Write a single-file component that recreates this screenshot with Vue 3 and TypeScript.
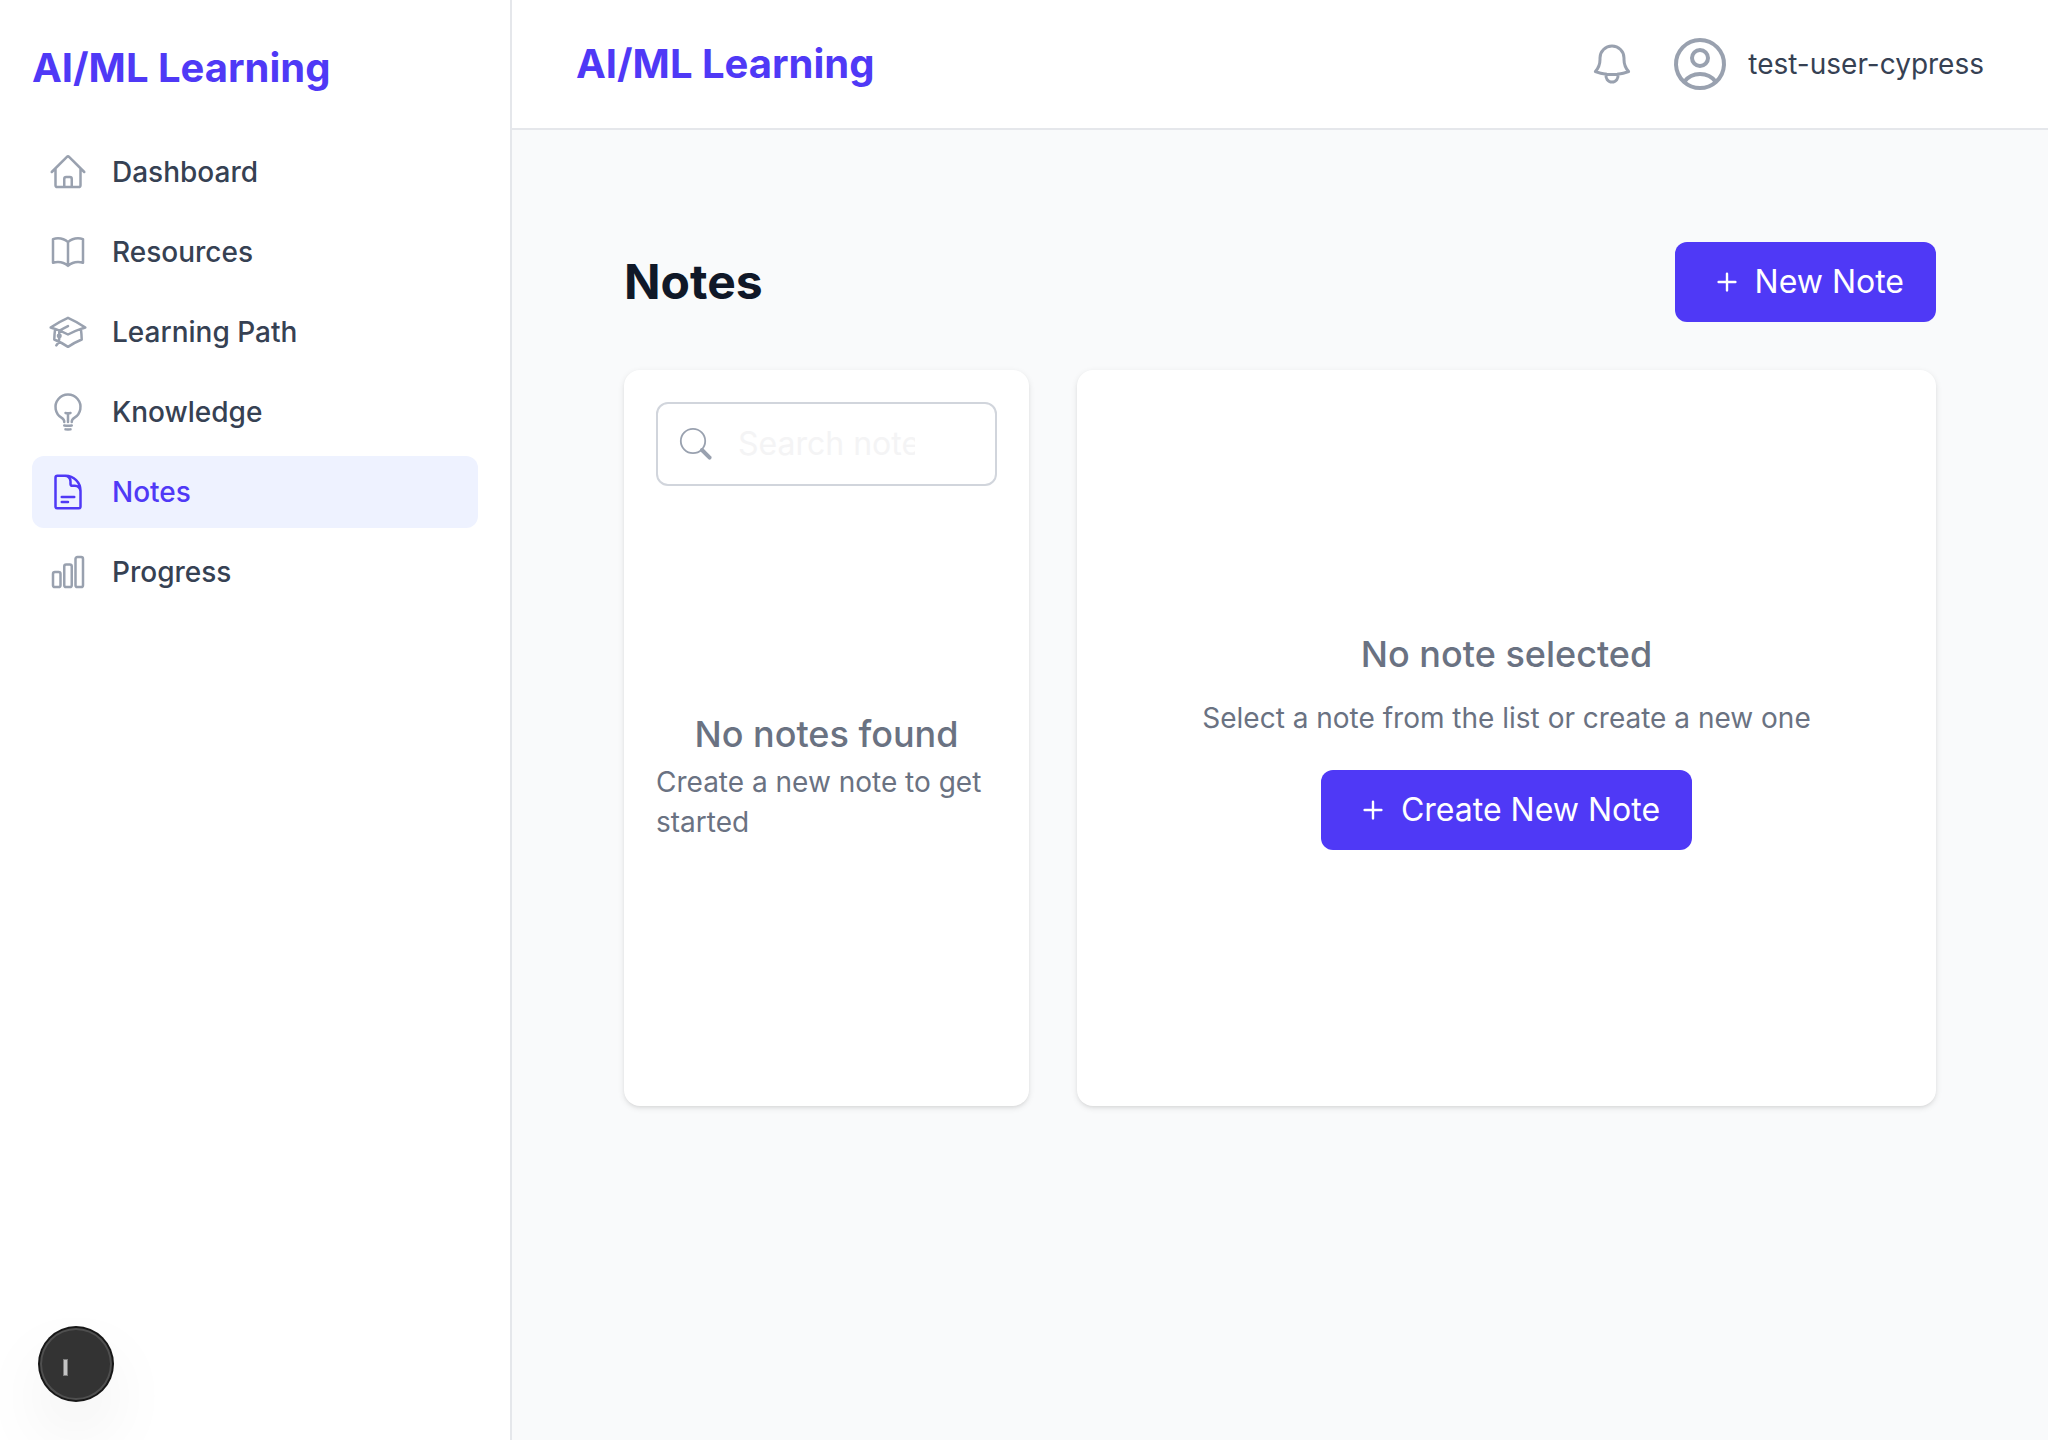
<script setup lang="ts">
interface NavItem {
  label: string
  icon: string
  active?: boolean
}

const navItems: NavItem[] = [
  {
    label: 'Dashboard',
    icon: 'm2.25 12 8.954-8.955c.44-.439 1.152-.439 1.591 0L21.75 12M4.5 9.75v10.125c0 .621.504 1.125 1.125 1.125H9.75v-4.875c0-.621.504-1.125 1.125-1.125h2.25c.621 0 1.125.504 1.125 1.125V21h4.125c.621 0 1.125-.504 1.125-1.125V9.75M8.25 21h8.25',
  },
  {
    label: 'Resources',
    icon: 'M12 6.042A8.967 8.967 0 0 0 6 3.75c-1.052 0-2.062.18-3 .512v14.25A8.987 8.987 0 0 1 6 18c2.305 0 4.408.867 6 2.292m0-14.25a8.966 8.966 0 0 1 6-2.292c1.052 0 2.062.18 3 .512v14.25A8.987 8.987 0 0 0 18 18a8.967 8.967 0 0 0-6 2.292m0-14.25v14.25',
  },
  {
    label: 'Learning Path',
    icon: 'M4.26 10.147a60.438 60.438 0 0 0-.491 6.347A48.62 48.62 0 0 1 12 20.904a48.62 48.62 0 0 1 8.232-4.41 60.46 60.46 0 0 0-.491-6.347m-15.482 0a50.636 50.636 0 0 0-2.658-.813A59.906 59.906 0 0 1 12 3.493a59.903 59.903 0 0 1 10.399 5.84c-.896.248-1.783.52-2.658.814m-15.482 0A50.717 50.717 0 0 1 12 13.489a50.702 50.702 0 0 1 7.74-3.342M6.75 15a.75.75 0 1 0 0-1.5.75.75 0 0 0 0 1.5Zm0 0v-3.675A55.378 55.378 0 0 1 12 8.443m-7.007 11.55A5.981 5.981 0 0 0 6.75 15.75v-1.5',
  },
  {
    label: 'Knowledge',
    icon: 'M12 18v-5.25m0 0a6.01 6.01 0 0 0 1.5-.189m-1.5.189a6.01 6.01 0 0 1-1.5-.189m3.75 7.478a12.06 12.06 0 0 1-4.5 0m3.75 2.383a14.406 14.406 0 0 1-3 0M14.25 18v-.192c0-.983.658-1.823 1.508-2.316a7.5 7.5 0 1 0-7.517 0c.85.493 1.509 1.333 1.509 2.316V18',
  },
  {
    label: 'Notes',
    active: true,
    icon: 'M19.5 14.25v-2.625a3.375 3.375 0 0 0-3.375-3.375h-1.5A1.125 1.125 0 0 1 13.5 7.125v-1.5a3.375 3.375 0 0 0-3.375-3.375H8.25m0 12.75h7.5m-7.5 3H12M10.5 2.25H5.625c-.621 0-1.125.504-1.125 1.125v17.25c0 .621.504 1.125 1.125 1.125h12.75c.621 0 1.125-.504 1.125-1.125V11.25a9 9 0 0 0-9-9Z',
  },
  {
    label: 'Progress',
    icon: 'M3 13.125C3 12.504 3.504 12 4.125 12h2.25c.621 0 1.125.504 1.125 1.125v6.75C7.5 20.496 6.996 21 6.375 21h-2.25A1.125 1.125 0 0 1 3 19.875v-6.75ZM9.75 8.625c0-.621.504-1.125 1.125-1.125h2.25c.621 0 1.125.504 1.125 1.125v11.25c0 .621-.504 1.125-1.125 1.125h-2.25a1.125 1.125 0 0 1-1.125-1.125V8.625ZM16.5 4.125c0-.621.504-1.125 1.125-1.125h2.25C20.496 3 21 3.504 21 4.125v15.75c0 .621-.504 1.125-1.125 1.125h-2.25a1.125 1.125 0 0 1-1.125-1.125V4.125Z',
  },
]

const plusPath =
  'M10.75 4.75a.75.75 0 0 0-1.5 0v4.5h-4.5a.75.75 0 0 0 0 1.5h4.5v4.5a.75.75 0 0 0 1.5 0v-4.5h4.5a.75.75 0 0 0 0-1.5h-4.5v-4.5Z'
</script>

<template>
  <div class="app">
    <aside class="sidebar">
      <div class="brand">AI/ML Learning</div>
      <nav class="nav">
        <a v-for="item in navItems" :key="item.label" class="nav-link" :class="{ active: item.active }">
          <svg class="outline nav-icon" viewBox="0 0 24 24"><path :d="item.icon" /></svg>
          <span>{{ item.label }}</span>
        </a>
      </nav>
    </aside>

    <div class="content">
      <header class="topbar">
        <div class="brand">AI/ML Learning</div>
        <div class="account">
          <svg class="outline bell" viewBox="0 0 24 24">
            <path d="M14.857 17.082a23.848 23.848 0 0 0 5.454-1.31A8.967 8.967 0 0 1 18 9.75V9A6 6 0 0 0 6 9v.75a8.967 8.967 0 0 1-2.312 6.022c1.733.64 3.56 1.085 5.455 1.31m5.714 0a24.255 24.255 0 0 1-5.714 0m5.714 0a3 3 0 1 1-5.714 0" />
          </svg>
          <svg class="outline avatar" viewBox="0 0 24 24">
            <path d="M17.982 18.725A7.488 7.488 0 0 0 12 15.75a7.488 7.488 0 0 0-5.982 2.975m11.963 0a9 9 0 1 0-11.963 0m11.963 0A8.966 8.966 0 0 1 12 21a8.966 8.966 0 0 1-5.982-2.275M15 9.75a3 3 0 1 1-6 0 3 3 0 0 1 6 0Z" />
          </svg>
          <span class="username">test-user-cypress</span>
        </div>
      </header>

      <main class="page">
        <div class="page-head">
          <h1>Notes</h1>
          <button class="btn" type="button">
            <svg class="plus" viewBox="0 0 20 20"><path :d="plusPath" /></svg>
            <span>New Note</span>
          </button>
        </div>

        <div class="panels">
          <section class="card list">
            <div class="search">
              <svg class="search-icon" viewBox="0 0 40 40">
                <circle cx="17" cy="17" r="12.2" />
                <path d="M26 26 33.6 33.6" />
              </svg>
              <span class="search-text">Search notes...</span>
            </div>
            <div class="list-empty">
              <h3>No notes found</h3>
              <p>Create a new note to get started</p>
            </div>
          </section>

          <section class="card detail">
            <h3>No note selected</h3>
            <p>Select a note from the list or create a new one</p>
            <button class="btn" type="button">
              <svg class="plus" viewBox="0 0 20 20"><path :d="plusPath" /></svg>
              <span>Create New Note</span>
            </button>
          </section>
        </div>
      </main>
    </div>

    <div class="dev-badge"><span class="dev-mark"></span></div>
  </div>
</template>

<style>
body {
  margin: 0;
  background: #f9fafb;
}
</style>

<style scoped>
.app {
  position: relative;
  display: flex;
  height: 1440px;
  overflow: hidden;
  background: #f9fafb;
  color: #364153;
  font-family: Inter, 'Liberation Sans', sans-serif;
  font-size: 28px;
  line-height: 40px;
}
.app * {
  box-sizing: border-box;
}
h1,
h3,
p {
  margin: 0;
}
.outline {
  flex: none;
  fill: none;
  stroke: #99a1af;
  stroke-width: 1.5;
  stroke-linecap: round;
  stroke-linejoin: round;
}
.brand {
  color: #4f39f6;
  font-size: 40px;
  font-weight: 700;
  line-height: 56px;
}
.sidebar {
  flex: none;
  width: 512px;
  padding: 40px 32px;
  border-right: 2px solid #e5e7eb;
  background: #fff;
}
.nav {
  display: flex;
  flex-direction: column;
  gap: 8px;
  margin-top: 40px;
}
.nav-link {
  display: flex;
  align-items: center;
  gap: 24px;
  padding: 16px;
  border-radius: 12px;
  font-weight: 500;
}
.nav-link.active {
  background: #eef2ff;
  color: #4f39f6;
}
.nav-link.active .nav-icon {
  stroke: #4f39f6;
}
.nav-icon {
  width: 40px;
  height: 40px;
}
.content {
  flex: 1;
  min-width: 0;
}
.topbar {
  display: flex;
  align-items: center;
  justify-content: space-between;
  height: 130px;
  padding: 0 64px;
  border-bottom: 2px solid #e5e7eb;
  background: #fff;
}
.account {
  display: flex;
  align-items: center;
}
.bell {
  width: 48px;
  height: 48px;
  margin-right: 32px;
}
.avatar {
  width: 64px;
  height: 64px;
  margin-right: 16px;
}
.page {
  padding: 112px;
}
.page-head {
  display: flex;
  align-items: center;
  justify-content: space-between;
  margin-bottom: 48px;
}
h1 {
  color: #101828;
  font-size: 48px;
  font-weight: 700;
  line-height: 64px;
}
.btn {
  display: flex;
  align-items: center;
  height: 80px;
  padding: 0 32px 0 36px;
  border: 0;
  border-radius: 12px;
  background: #4f39f6;
  color: #fff;
  font: 400 32px/48px Inter, 'Liberation Sans', sans-serif;
}
.plus {
  width: 32px;
  height: 32px;
  margin-right: 12px;
  fill: #fff;
}
.panels {
  display: flex;
  gap: 48px;
}
.card {
  height: 736px;
  border-radius: 16px;
  background: #fff;
  box-shadow: 0 2px 6px rgba(0, 0, 0, 0.1), 0 2px 4px -2px rgba(0, 0, 0, 0.1);
}
h3 {
  color: #6a7282;
  font-size: 36px;
  font-weight: 500;
  line-height: 56px;
}
p {
  color: #6a7282;
}
.list {
  display: flex;
  flex: none;
  flex-direction: column;
  width: 405px;
  padding: 32px;
}
.search {
  display: flex;
  flex: none;
  align-items: center;
  height: 84px;
  padding-left: 18px;
  border: 2px solid #d1d5dc;
  border-radius: 12px;
}
.search-icon {
  width: 40px;
  height: 40px;
  fill: none;
  stroke: #99a1af;
  stroke-width: 1.8;
  stroke-linecap: round;
}
.search-icon path {
  stroke-width: 4;
}
.search-text {
  width: 177px;
  margin-left: 22px;
  overflow: hidden;
  color: #f4f4f5;
  font-size: 32px;
  line-height: 48px;
  white-space: nowrap;
}
.list-empty {
  display: flex;
  flex: 1;
  flex-direction: column;
  align-items: center;
  justify-content: center;
  padding-bottom: 12px;
}
.detail {
  display: flex;
  flex: 1;
  flex-direction: column;
  align-items: center;
  justify-content: center;
}
.detail p {
  margin: 16px 0 32px;
}
.dev-badge {
  position: absolute;
  left: 40px;
  bottom: 40px;
  width: 72px;
  height: 72px;
  border-radius: 50%;
  background: #333;
  box-shadow: 0 0 0 2px #171717, inset 0 0 0 2px rgba(255, 255, 255, 0.14), 0 32px 72px -14px rgba(0, 0, 0, 0.17);
}
.dev-mark {
  position: absolute;
  left: 23px;
  top: 31px;
  width: 5px;
  height: 17px;
  border: 1px solid #7d7d7d;
  background: #c4c4c4;
}
</style>
